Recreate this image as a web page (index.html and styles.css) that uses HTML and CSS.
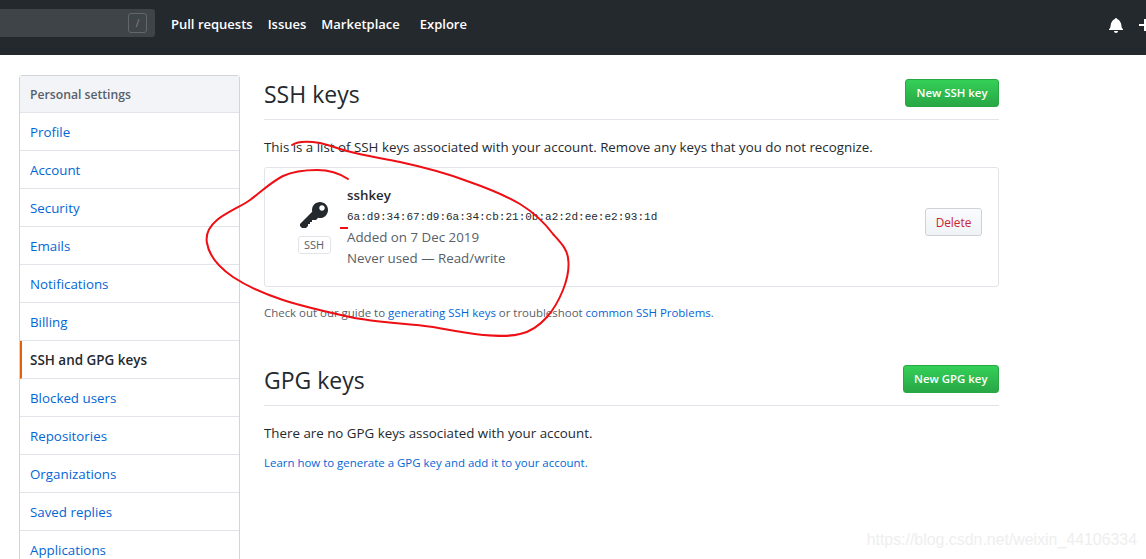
FILE: index.html
```html
<!DOCTYPE html>
<html lang="en">
  <head>
    <meta charset="UTF-8" />
    <title>SSH and GPG keys</title>
    <link rel="stylesheet" href="styles.css">
  </head>
  <body>
    <header class="topbar">
      <div class="search"><span class="slash-key">/</span></div>
      <nav class="top-nav">
        <a href="#">Pull requests</a>
        <a href="#">Issues</a>
        <a href="#">Marketplace</a>
        <a href="#" class="explore">Explore</a>
      </nav>
      <div class="top-icons">
        <svg class="bell" viewBox="0 0 14 16" width="14" height="16"><path fill="#fff" d="M14 12v1H0v-1l.73-.58c.77-.77.81-2.55 1.19-4.42C2.69 3.23 6 2 6 2c0-.55.45-1 1-1s1 .45 1 1c0 0 3.39 1.23 4.16 5 .38 1.88.42 3.66 1.19 4.42l.66.58H14zm-7 4c1.11 0 2-.89 2-2H5c0 1.11.89 2 2 2z"/></svg>
        <svg class="plus" viewBox="0 0 12 16" width="12" height="16"><path fill="#fff" d="M12 9H7v5H5V9H0V7h5V2h2v5h5v2z"/></svg>
      </div>
    </header>

    <div class="page">
      <aside class="sidebar">
        <div class="sidebar-head">Personal settings</div>
        <a href="#">Profile</a>
        <a href="#">Account</a>
        <a href="#">Security</a>
        <a href="#">Emails</a>
        <a href="#">Notifications</a>
        <a href="#">Billing</a>
        <a href="#" class="selected">SSH and GPG keys</a>
        <a href="#">Blocked users</a>
        <a href="#">Repositories</a>
        <a href="#">Organizations</a>
        <a href="#">Saved replies</a>
        <a href="#">Applications</a>
      </aside>

      <main class="content">
        <div class="section-head">
          <h2>SSH keys</h2>
          <a href="#" class="btn-green">New SSH key</a>
        </div>
        <p class="intro">This is a list of SSH keys associated with your account. Remove any keys that you do not recognize.</p>

        <div class="key-box">
          <div class="key-icon">
            <svg viewBox="0 0 14 16" width="28" height="32"><path fill="#24292e" d="M12.83 2.17C12.08 1.42 11.14 1.03 10 1c-1.13.03-2.08.42-2.83 1.17S6.04 3.86 6.01 5c0 .3.03.59.09.89L0 12v1l1 1h2l1-1v-1h1v-1h1v-1h2l1.09-1.11c.3.08.59.11.91.11 1.14-.03 2.08-.42 2.83-1.17S13.97 6.14 14 5c-.03-1.14-.42-2.08-1.17-2.83zM11 5.38c-.77 0-1.38-.61-1.38-1.38 0-.77.61-1.38 1.38-1.38.77 0 1.38.61 1.38 1.38 0 .77-.61 1.38-1.38 1.38z"/></svg>
            <span class="label">SSH</span>
          </div>
          <div class="key-info">
            <strong>sshkey</strong>
            <code>6a:d9:34:67:d9:6a:34:cb:21:0b:a2:2d:ee:e2:93:1d</code>
            <span>Added on 7 Dec 2019</span>
            <span>Never used — Read/write</span>
          </div>
          <button class="btn-delete">Delete</button>
        </div>
        <p class="note">Check out our guide to <a href="#">generating SSH keys</a> or troubleshoot <a href="#">common SSH Problems</a>.</p>

        <div class="section-head gpg">
          <h2>GPG keys</h2>
          <a href="#" class="btn-green">New GPG key</a>
        </div>
        <p class="intro">There are no GPG keys associated with your account.</p>
        <p class="note learn"><a href="#">Learn how to generate a GPG key and add it to your account.</a></p>
      </main>
    </div>

    <svg class="scribble" width="1146" height="559" viewBox="0 0 1146 559">
      <path d="M292 145 C298 141 308 141 320 143 C330 145 338 149 347 151 C365 156 382 158 400 162 C423 167 446 173 467 181 C487 188 505 195 520 204 C533 212 544 222 553 234 C561 243 567 249 568 258 C570 270 567 280 563 290 C559 300 554 309 547 317 C539 326 530 332 520 334 C508 337 496 336 483 335 C466 333 450 330 433 327 C405 323 378 323 350 317 C327 312 305 307 283 300 C265 294 248 287 233 277 C220 268 209 256 207 243 C205 233 210 226 217 220 C227 212 240 207 250 200 C261 192 271 182 283 176 C294 171 305 170 317 170 C328 170 339 173 348 179" fill="none" stroke="#ee0f14" stroke-width="2" stroke-linecap="round"/>
      <path d="M340 228 H348" fill="none" stroke="#ee0f14" stroke-width="2"/>
    </svg>
    <div class="watermark">https://blog.csdn.net/weixin_44106334</div>
  </body>
</html>
```

FILE: styles.css
```css
* {
  margin: 0;
  padding: 0;
  box-sizing: border-box;
}

html,
body {
  height: 559px;
  overflow: hidden;
}

body {
  position: relative;
  background: #fff;
  color: #24292e;
  font-family: "Open Sans", "Noto Sans", sans-serif;
  font-size: 13.33px;
}

a {
  color: #0366d6;
  text-decoration: none;
}

.topbar {
  height: 55px;
  background: #24292e;
  display: flex;
  align-items: flex-start;
}

.search {
  width: 155px;
  height: 28px;
  margin-top: 9px;
  background: #3f4448;
  border-radius: 0 3px 3px 0;
  display: flex;
  justify-content: flex-end;
  align-items: center;
  padding-right: 8px;
}

.slash-key {
  width: 19px;
  height: 20px;
  border: 1px solid #63676b;
  border-radius: 3px;
  color: #85888b;
  font-size: 10px;
  text-align: center;
  line-height: 18px;
}

.top-nav {
  display: flex;
  gap: 15px;
  margin-left: 16px;
  height: 48px;
  align-items: center;
}

.top-nav a {
  color: #fff;
  font-weight: 600;
  font-size: 13px;
}

.top-nav .explore {
  margin-left: 5px;
}

.top-icons {
  margin-left: auto;
  display: flex;
  gap: 16px;
  margin-top: 17px;
  margin-right: -5px;
}

.page {
  display: flex;
  align-items: flex-start;
  padding: 20px 0 0 19px;
}

.sidebar {
  width: 221px;
  flex-shrink: 0;
  border: 1px solid #d1d5da;
  border-radius: 3px;
}

.sidebar-head {
  height: 37px;
  background: #f3f4f8;
  border-bottom: 1px solid #e1e4e8;
  padding-left: 10px;
  line-height: 37px;
  font-weight: 600;
  font-size: 12.2px;
  color: #586069;
}

.sidebar a {
  display: block;
  height: 38px;
  padding-left: 10px;
  line-height: 38px;
  border-bottom: 1px solid #e1e4e8;
}

.sidebar a.selected {
  color: #24292e;
  font-size: 13.45px;
  font-weight: 600;
  padding-left: 8px;
  border-left: 2px solid #e36209;
}

.content {
  width: 735px;
  margin-left: 24px;
}

.section-head {
  height: 45px;
  border-bottom: 1px solid #e1e4e8;
  display: flex;
  justify-content: space-between;
  align-items: flex-start;
  padding-top: 4px;
}

.section-head h2 {
  font-size: 23px;
  font-weight: 400;
  line-height: 30px;
}

.btn-green {
  height: 28px;
  padding: 0 10.5px;
  background: linear-gradient(#34d058, #28a745);
  border: 1px solid #28a745;
  border-radius: 3px;
  color: #fff;
  font-size: 11.4px;
  font-weight: 600;
  line-height: 26px;
}

.intro {
  margin-top: 17px;
  line-height: 20px;
}

.key-box {
  margin-top: 10px;
  height: 120px;
  border: 1px solid #e1e4e8;
  border-radius: 3px;
  display: flex;
  align-items: center;
}

.key-icon {
  width: 82px;
  padding-left: 16px;
  margin-top: -1px;
  display: flex;
  flex-direction: column;
  align-items: center;
  gap: 4px;
}

.key-icon svg {
  display: block;
}

.label {
  width: 33px;
  height: 18px;
  border: 1px solid #e1e4e8;
  border-radius: 3px;
  color: #586069;
  font-size: 11px;
  text-align: center;
  line-height: 16px;
}

.key-info {
  flex: 1;
  display: flex;
  flex-direction: column;
  color: #586069;
  line-height: 21px;
}

.key-info strong {
  color: #24292e;
  font-weight: 600;
}

.key-info code {
  color: #24292e;
  font-family: "Liberation Mono", monospace;
  font-size: 11px;
  line-height: 23px;
  margin-bottom: -2px;
}

.btn-delete {
  width: 57px;
  height: 28px;
  margin-right: 16px;
  margin-top: -10px;
  background: linear-gradient(#fafbfc, #eff3f6);
  border: 1px solid #ced2d6;
  border-radius: 3px;
  color: #cb2431;
  font-family: inherit;
  font-size: 11.8px;
}

.note {
  margin-top: 17px;
  font-size: 11.45px;
  line-height: 18px;
  color: #586069;
}

.section-head.gpg {
  margin-top: 39px;
}

.learn {
  margin-top: 11px;
}

.scribble {
  position: absolute;
  top: 0;
  left: 0;
  pointer-events: none;
}

.watermark {
  position: absolute;
  right: 9px;
  top: 531px;
  font-family: "Liberation Sans", sans-serif;
  font-size: 15.9px;
  color: #eeeeee;
}
```
